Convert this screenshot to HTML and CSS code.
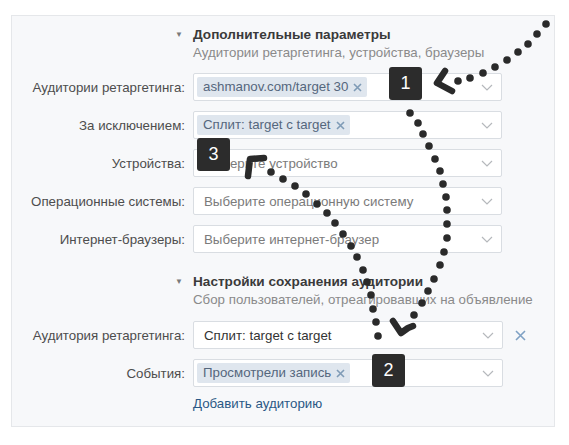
FILE: index.html
```html
<!DOCTYPE html>
<html lang="ru">
<head>
<meta charset="utf-8">
<link rel="stylesheet" href="styles.css">
</head>
<body>
<div class="page">
  <div class="panel">
    <div class="grid">
      <div class="tri">▼</div>
      <div class="head">
        <div class="title">Дополнительные параметры</div>
        <div class="sub">Аудитории ретаргетинга, устройства, браузеры</div>
      </div>

      <div class="label">Аудитории ретаргетинга:</div>
      <div class="input"><span class="tag">ashmanov.com/target 30<svg class="tx" width="9" height="9" viewBox="0 0 9 9"><path d="M1 1L8 8M8 1L1 8"/></svg></span><svg class="chev" width="12" height="7" viewBox="0 0 12 7"><path d="M1 1L6 6L11 1"/></svg></div>
      <div></div>

      <div class="label">За исключением:</div>
      <div class="input"><span class="tag">Сплит: target с target<svg class="tx" width="9" height="9" viewBox="0 0 9 9"><path d="M1 1L8 8M8 1L1 8"/></svg></span><svg class="chev" width="12" height="7" viewBox="0 0 12 7"><path d="M1 1L6 6L11 1"/></svg></div>
      <div></div>

      <div class="label">Устройства:</div>
      <div class="input"><span class="ph">Выберите устройство</span><svg class="chev" width="12" height="7" viewBox="0 0 12 7"><path d="M1 1L6 6L11 1"/></svg></div>
      <div></div>

      <div class="label">Операционные системы:</div>
      <div class="input"><span class="ph">Выберите операционную систему</span><svg class="chev" width="12" height="7" viewBox="0 0 12 7"><path d="M1 1L6 6L11 1"/></svg></div>
      <div></div>

      <div class="label">Интернет-браузеры:</div>
      <div class="input"><span class="ph">Выберите интернет-браузер</span><svg class="chev" width="12" height="7" viewBox="0 0 12 7"><path d="M1 1L6 6L11 1"/></svg></div>
      <div></div>

      <div class="tri tri2">▼</div>
      <div class="head head2">
        <div class="title">Настройки сохранения аудитории</div>
        <div class="sub">Сбор пользователей, отреагировавших на объявление</div>
      </div>

      <div class="label">Аудитория ретаргетинга:</div>
      <div class="input wide"><span class="val">Сплит: target с target</span><svg class="chev" width="12" height="7" viewBox="0 0 12 7"><path d="M1 1L6 6L11 1"/></svg></div>
      <div class="rm"><svg width="11" height="11" viewBox="0 0 11 11"><path d="M1 1L10 10M10 1L1 10"/></svg></div>

      <div class="label">События:</div>
      <div class="input wide"><span class="tag">Просмотрели запись<svg class="tx" width="9" height="9" viewBox="0 0 9 9"><path d="M1 1L8 8M8 1L1 8"/></svg></span><svg class="chev" width="12" height="7" viewBox="0 0 12 7"><path d="M1 1L6 6L11 1"/></svg></div>
      <div></div>

      <div></div>
      <div class="link">Добавить аудиторию</div>
      <div></div>
    </div>
  </div>

  <div class="badge b1">1</div>
  <div class="badge b2">2</div>
  <div class="badge b3">3</div>

  <svg class="doodle" width="569" height="445" viewBox="0 0 569 445">
    <g fill="#2a2a2a">
      <circle cx="546" cy="24" r="3.8"/>
      <circle cx="537" cy="34" r="3.8"/>
      <circle cx="528" cy="44" r="3.8"/>
      <circle cx="518" cy="52" r="3.8"/>
      <circle cx="507" cy="60" r="3.8"/>
      <circle cx="495" cy="67" r="3.8"/>
      <circle cx="483" cy="73" r="3.8"/>
      <circle cx="470" cy="78" r="3.8"/>
      <circle cx="458" cy="81" r="3.8"/>

      <circle cx="410" cy="113" r="3.8"/>
      <circle cx="418" cy="123" r="3.8"/>
      <circle cx="423" cy="134" r="3.8"/>
      <circle cx="429" cy="146" r="3.8"/>
      <circle cx="435" cy="159" r="3.8"/>
      <circle cx="440" cy="171" r="3.8"/>
      <circle cx="443" cy="184" r="3.8"/>
      <circle cx="446" cy="197" r="3.8"/>
      <circle cx="447" cy="210" r="3.8"/>
      <circle cx="447" cy="224" r="3.8"/>
      <circle cx="447" cy="238" r="3.8"/>
      <circle cx="444" cy="252" r="3.8"/>
      <circle cx="440" cy="265" r="3.8"/>
      <circle cx="434" cy="279" r="3.8"/>
      <circle cx="428" cy="291" r="3.8"/>
      <circle cx="422" cy="303" r="3.8"/>
      <circle cx="414" cy="315" r="3.8"/>

      <circle cx="271" cy="172" r="3.8"/>
      <circle cx="283" cy="179" r="3.8"/>
      <circle cx="295" cy="186" r="3.8"/>
      <circle cx="306" cy="194" r="3.8"/>
      <circle cx="317" cy="204" r="3.8"/>
      <circle cx="327" cy="213" r="3.8"/>
      <circle cx="335" cy="223" r="3.8"/>
      <circle cx="343" cy="234" r="3.8"/>
      <circle cx="351" cy="246" r="3.8"/>
      <circle cx="357" cy="257" r="3.8"/>
      <circle cx="363" cy="270" r="3.8"/>
      <circle cx="367" cy="282" r="3.8"/>
      <circle cx="371" cy="295" r="3.8"/>
      <circle cx="373" cy="309" r="3.8"/>
      <circle cx="376" cy="322" r="3.8"/>
      <circle cx="378" cy="336" r="3.8"/>
    </g>
    <g fill="none" stroke="#2a2a2a" stroke-linecap="round" stroke-linejoin="round" stroke-width="6.5">
      <polyline points="445,71 437,83 452,91"/>
      <polyline points="248,176 250,159 264,158"/>
      <polyline points="393,321 401,333 408,328 413,326"/>
    </g>
  </svg>
</div>
</body>
</html>
```

FILE: styles.css
```css
html, body {
  margin: 0;
  padding: 0;
  background: #ffffff;
}
body {
  font-family: "Liberation Sans", Arial, sans-serif;
  font-size: 13.3px;
  color: #4a4a4a;
}
.page {
  position: relative;
  width: 569px;
  height: 445px;
  overflow: hidden;
}
.panel {
  position: absolute;
  left: 11px;
  top: 15px;
  width: 542px;
  height: 410px;
  background: #f7f8fa;
  border: 1px solid #e5e7ea;
}
.grid {
  display: grid;
  grid-template-columns: 173px 309px 30px;
  column-gap: 8px;
  row-gap: 10px;
  padding-top: 10px;
  align-items: center;
}
.tri {
  align-self: start;
  text-align: right;
  font-size: 8px;
  line-height: 18px;
  color: #7a7a7a;
  padding-right: 2px;
}
.head {
  grid-column: 2 / span 2;
  margin-bottom: 1px;
}
.head2 {
  margin-top: 10px;
  margin-bottom: 2px;
}
.tri2 {
  margin-top: 10px;
}
.title {
  font-weight: bold;
  font-size: 13.6px;
  line-height: 18px;
  color: #3a3a3a;
  white-space: nowrap;
}
.sub {
  line-height: 18px;
  color: #8a8a8a;
  white-space: nowrap;
}
.label {
  text-align: right;
  color: #4d4d4d;
  white-space: nowrap;
}
.input {
  height: 28px;
  box-sizing: border-box;
  background: #ffffff;
  border: 1px solid #d9dde2;
  border-radius: 2px;
  display: flex;
  align-items: center;
  padding-left: 3px;
  position: relative;
}
.input.wide {
  width: 310px;
}
.tag {
  background: #dfe6ee;
  color: #55677d;
  height: 20px;
  line-height: 20px;
  padding: 0 5px 0 6px;
  border-radius: 2px;
  white-space: nowrap;
  display: flex;
  align-items: center;
}
.tx {
  margin-left: 5px;
  fill: none;
  stroke: #7f9bb6;
  stroke-width: 1.6;
}
.ph {
  color: #7b7b7b;
  padding-left: 7px;
  white-space: nowrap;
}
.val {
  color: #333;
  padding-left: 7px;
  white-space: nowrap;
}
.chev {
  position: absolute;
  right: 8px;
  top: 10px;
  fill: none;
  stroke: #b5b8bc;
  stroke-width: 1.2;
}
.rm {
  padding-left: 5px;
  display: flex;
  align-items: center;
}
.rm svg {
  fill: none;
  stroke: #7fa1c4;
  stroke-width: 1.6;
}
.link {
  color: #2a5885;
  line-height: 18px;
  margin-top: -2px;
}
.badge {
  position: absolute;
  width: 33px;
  height: 33px;
  background: #2c2c2c;
  border-radius: 3px;
  color: #ffffff;
  font-size: 18px;
  line-height: 33px;
  text-align: center;
}
.b1 { left: 389px; top: 67px; }
.b2 { left: 372px; top: 354px; }
.b3 { left: 197px; top: 138px; }
.doodle {
  position: absolute;
  left: 0;
  top: 0;
}
```
